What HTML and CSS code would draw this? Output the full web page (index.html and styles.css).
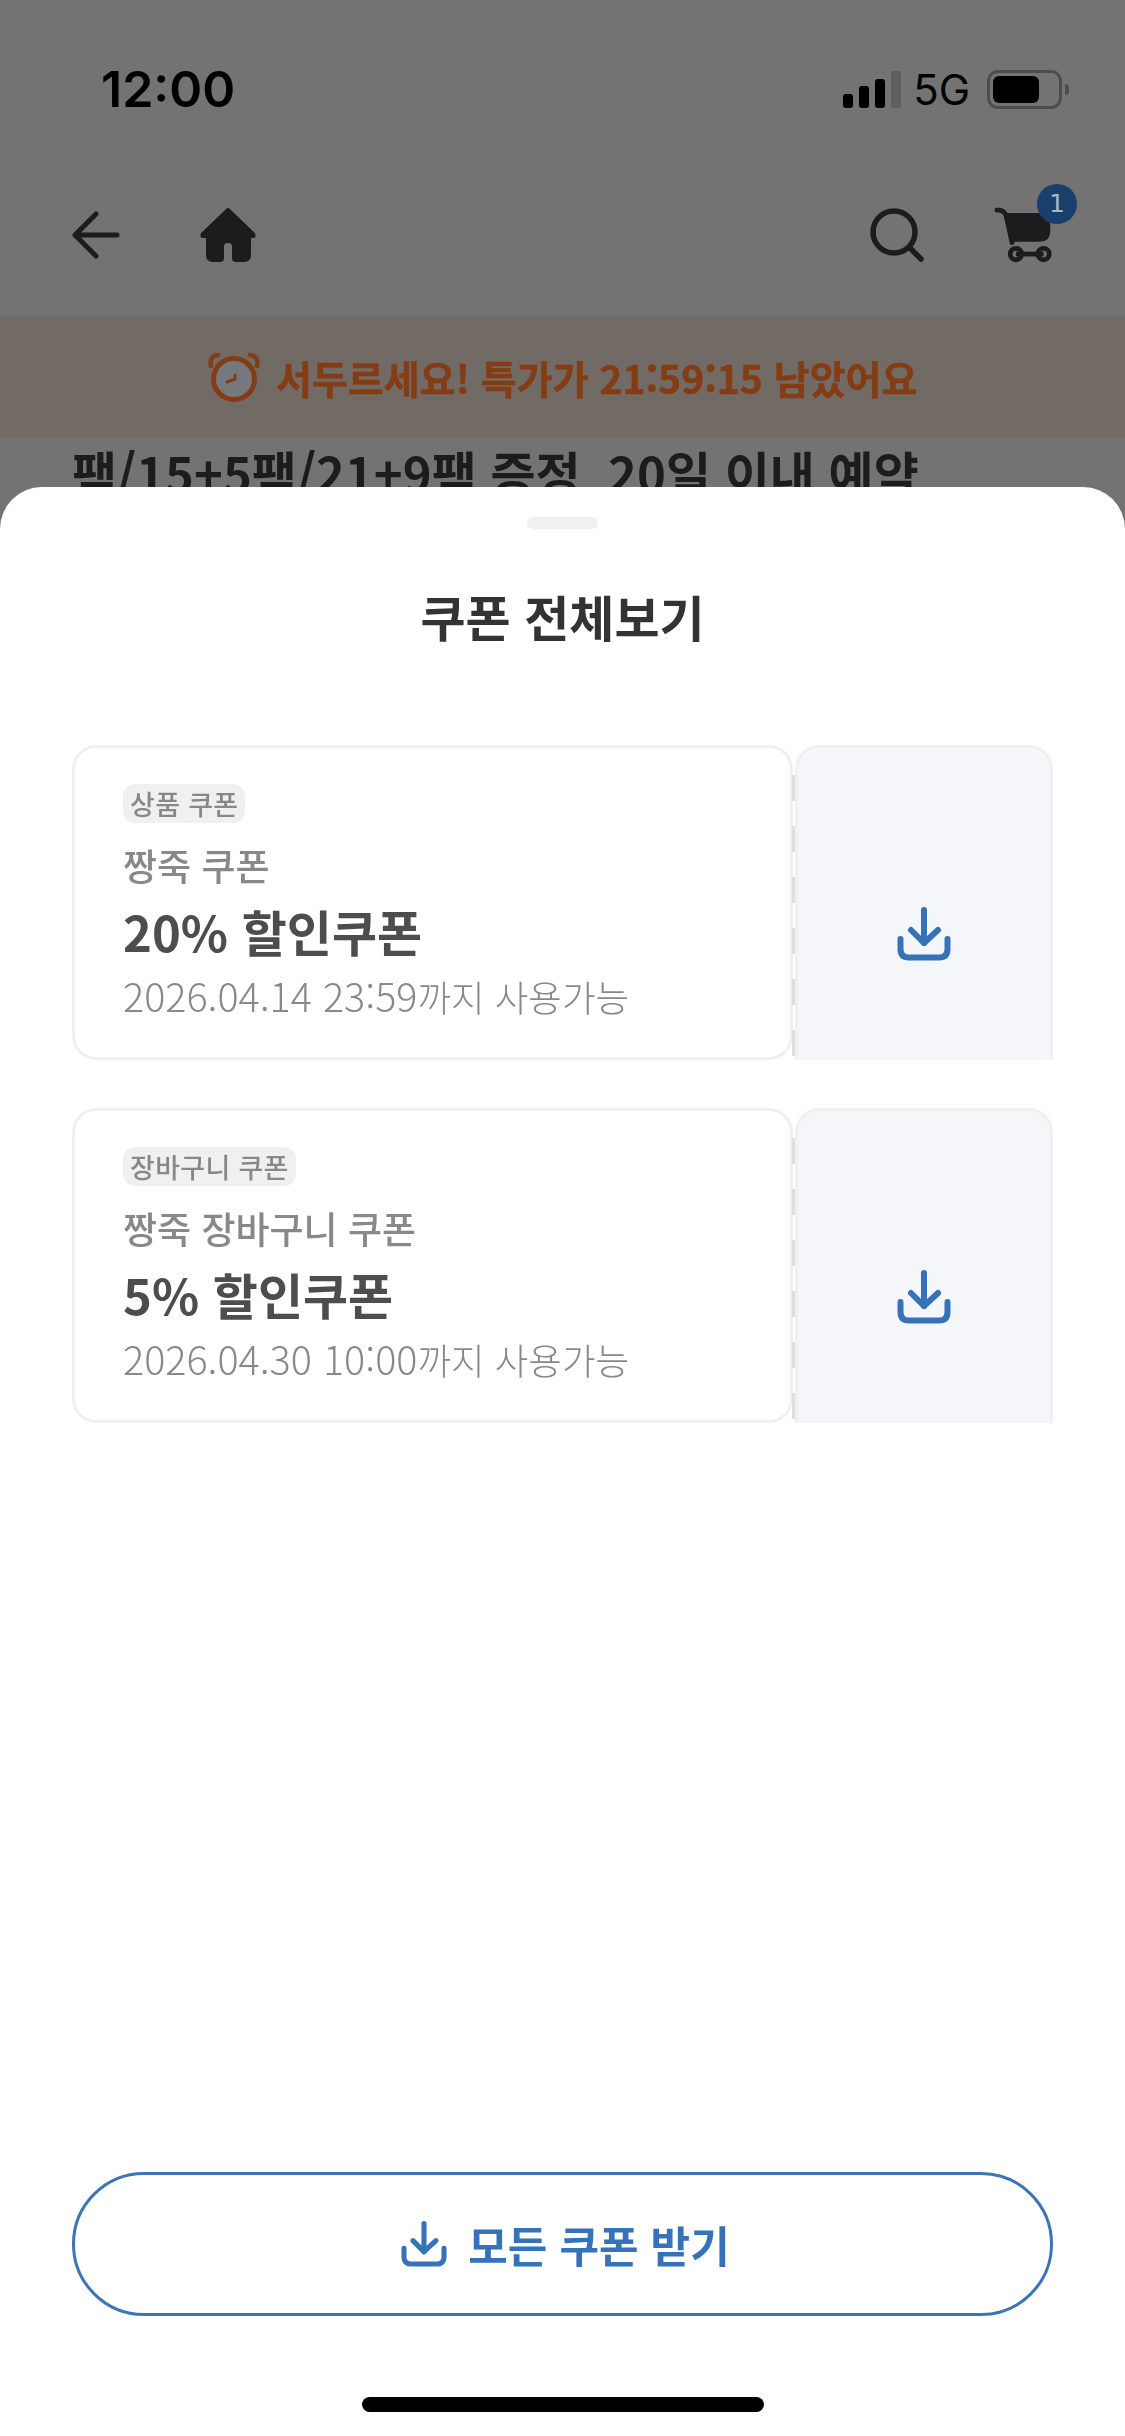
FILE: index.html
```html
<!DOCTYPE html>
<html lang="ko">
<head>
    <meta charset="UTF-8">
    <meta name="viewport" content="width=device-width, initial-scale=1.0">
    <title>쿠폰 전체보기</title>
    <link rel="stylesheet" href="styles.css">
</head>
<body>
    <div class="screen">
        <div class="status-bar">
            <span class="time">12:00</span>
            <div class="status-right">
                <div class="signal">
                    <span class="bar bar-1"></span>
                    <span class="bar bar-2"></span>
                    <span class="bar bar-3"></span>
                    <span class="bar bar-4"></span>
                </div>
                <span class="network">5G</span>
                <div class="battery"><span class="battery-level"></span></div>
            </div>
        </div>

        <div class="nav">
            <div class="nav-group nav-left">
                <svg class="icon-back" viewBox="0 0 48 48" fill="none" stroke="#1c1c1c" stroke-width="5" stroke-linecap="round" stroke-linejoin="round">
                    <path d="M45 24H4"/>
                    <path d="M24 3L3 24l21 21"/>
                </svg>
                <svg class="icon-home" viewBox="0 0 56 54">
                    <path fill="#1c1c1c" stroke="#1c1c1c" stroke-width="4" stroke-linejoin="round" d="M28 2L2.500 26.500V28H8V47Q8 52 13 52H20Q22 52 22 50V38Q22 33 28 33Q34 33 34 38V50Q34 52 36 52H44Q49 52 49 47V28H53.500V26.500Z"/>
                </svg>
            </div>
            <div class="nav-group nav-right">
                <svg class="icon-search" viewBox="0 0 54 54" fill="none" stroke="#1c1c1c" stroke-width="5.500" stroke-linecap="round">
                    <circle cx="24" cy="24" r="21"/>
                    <path d="M40 40L51 51"/>
                </svg>
                <div class="cart">
                    <svg class="icon-cart" viewBox="0 0 64 60" fill="none" stroke="#1c1c1c">
                        <path stroke-width="5" stroke-linecap="round" stroke-linejoin="round" d="M3 4Q11 3 13 11L19 38"/>
                        <path fill="#1c1c1c" stroke="none" d="M13 7H59V26Q59 37 48 37H19Z"/>
                        <path stroke-width="5" d="M23 50H52"/>
                        <circle cx="23" cy="50" r="6" stroke-width="5"/>
                        <circle cx="52" cy="50" r="6" stroke-width="5"/>
                    </svg>
                    <span class="cart-badge">1</span>
                </div>
            </div>
        </div>

        <div class="timer-banner">
            <svg class="icon-alarm" viewBox="0 0 54 50">
                <circle cx="27" cy="27" r="20.500" fill="#75787c" stroke="#843c14" stroke-width="5"/>
                <path fill="none" stroke="#843c14" stroke-width="4.500" stroke-linecap="round" d="M4 14Q2 4 11 3"/>
                <path fill="none" stroke="#843c14" stroke-width="4.500" stroke-linecap="round" d="M50 14Q52 4 43 3"/>
                <path fill="none" stroke="#843c14" stroke-width="3" stroke-linecap="round" stroke-linejoin="round" d="M28 23V27L20 30"/>
            </svg>
            <span class="timer-text">서두르세요! 특가가 21:59:15 남았어요</span>
        </div>

        <h1 class="deal-title">팩/15+5팩/21+9팩 증정&nbsp; 20일 이내 예약</h1>

        <div class="sheet">
            <div class="sheet-handle"></div>
            <h2 class="sheet-title">쿠폰 전체보기</h2>

            <div class="coupon-list">
                <div class="coupon">
                    <div class="coupon-body">
                        <span class="coupon-tag">상품 쿠폰</span>
                        <p class="coupon-name">짱죽 쿠폰</p>
                        <p class="coupon-discount">20% 할인쿠폰</p>
                        <p class="coupon-date"><span class="coupon-time">2026.04.14 23:59</span>까지 사용가능</p>
                    </div>
                    <div class="coupon-action">
                        <svg class="icon-download" viewBox="0 0 54 54" fill="none" stroke="#3572b8" stroke-width="6" stroke-linecap="round" stroke-linejoin="round">
                            <path d="M27 3V36"/>
                            <path d="M14 23L27 36L41 23"/>
                            <path d="M3.500 32V42Q3.500 50.500 12 50.500H42Q50.500 50.500 50.500 42V32"/>
                        </svg>
                    </div>
                </div>

                <div class="coupon">
                    <div class="coupon-body">
                        <span class="coupon-tag">장바구니 쿠폰</span>
                        <p class="coupon-name">짱죽 장바구니 쿠폰</p>
                        <p class="coupon-discount">5% 할인쿠폰</p>
                        <p class="coupon-date"><span class="coupon-time">2026.04.30 10:00</span>까지 사용가능</p>
                    </div>
                    <div class="coupon-action">
                        <svg class="icon-download" viewBox="0 0 54 54" fill="none" stroke="#3572b8" stroke-width="6" stroke-linecap="round" stroke-linejoin="round">
                            <path d="M27 3V36"/>
                            <path d="M14 23L27 36L41 23"/>
                            <path d="M3.500 32V42Q3.500 50.500 12 50.500H42Q50.500 50.500 50.500 42V32"/>
                        </svg>
                    </div>
                </div>
            </div>

            <button class="download-all">
                <svg class="icon-download-small" viewBox="0 0 54 54" fill="none" stroke="#3572b8" stroke-width="6" stroke-linecap="round" stroke-linejoin="round">
                    <path d="M27 3V36"/>
                    <path d="M14 23L27 36L41 23"/>
                    <path d="M3.500 32V42Q3.500 50.500 12 50.500H42Q50.500 50.500 50.500 42V32"/>
                </svg>
                <span>모든 쿠폰 받기</span>
            </button>

            <div class="home-indicator"></div>
        </div>
    </div>
</body>
</html>
```

FILE: styles.css
```css
html, body {
    margin: 0;
    padding: 0;
    background-color: #fff;
}
.screen {
    position: relative;
    width: 1125px;
    height: 2436px;
    overflow: hidden;
    background-color: #737373;
    font-family: "Noto Sans CJK KR", "Noto Sans", sans-serif;
}

/* status bar */
.status-bar {
    display: flex;
    justify-content: space-between;
    align-items: center;
    height: 178px;
    padding: 0 63px 0 101px;
    box-sizing: border-box;
    font-family: Inter, sans-serif;
    color: #000;
}
.time {
    font-size: 50px;
    font-weight: 600;
}
.status-right {
    display: flex;
    align-items: center;
}
.signal {
    display: flex;
    align-items: flex-end;
    gap: 6px;
    height: 37px;
    margin-right: 12px;
}
.bar {
    width: 10px;
    border-radius: 3px;
    background-color: #000;
}
.bar-1 { height: 14px; }
.bar-2 { height: 22px; }
.bar-3 { height: 29px; }
.bar-4 { height: 37px; background-color: #5e5e5e; }
.network {
    font-size: 42px;
    margin-right: 17px;
}
.battery {
    position: relative;
    width: 75px;
    height: 39px;
    box-sizing: border-box;
    padding: 3px;
    border: 3px solid #4d4d4d;
    border-radius: 11px;
}
.battery::after {
    content: "";
    position: absolute;
    right: -10px;
    top: 11px;
    width: 4px;
    height: 11px;
    border-radius: 0 4px 4px 0;
    background-color: #4d4d4d;
}
.battery-level {
    display: block;
    width: 46px;
    height: 27px;
    border-radius: 6px;
    background-color: #000;
}

/* top nav */
.nav {
    display: flex;
    justify-content: space-between;
    align-items: center;
    height: 137px;
    padding: 0 70px 24px 72px;
    box-sizing: border-box;
}
.nav-group {
    display: flex;
    align-items: center;
}
.nav-left { gap: 80px; }
.nav-right { gap: 70px; }
.icon-back { width: 48px; height: 48px; display: block; }
.icon-home { width: 56px; height: 54px; display: block; }
.icon-search { width: 54px; height: 54px; display: block; }
.cart {
    position: relative;
    width: 61px;
    height: 58px;
}
.icon-cart {
    display: block;
    width: 61px;
    height: 58px;
}
.cart-badge {
    position: absolute;
    left: 43px;
    top: -22px;
    width: 40px;
    height: 40px;
    border-radius: 50%;
    background-color: #1a3f6d;
    color: #a9b7c9;
    font-family: "DejaVu Sans", sans-serif;
    font-size: 25px;
    line-height: 40px;
    text-align: center;
}

/* banner behind the sheet */
.timer-banner {
    display: flex;
    justify-content: center;
    align-items: center;
    gap: 15px;
    height: 123px;
    background-color: #726a64;
}
.timer-text {
    color: #843c14;
    font-size: 39px;
    font-weight: 700;
    -webkit-text-stroke: 0.5px #843c14;
    will-change: transform;
}
.icon-alarm { width: 54px; height: 50px; flex: none; }
.deal-title {
    margin: 0;
    padding: 0 72px;
    font-size: 49px;
    font-weight: 700;
    line-height: 68px;
    white-space: nowrap;
    color: #1c1c1c;
}

/* bottom sheet */
.sheet {
    position: absolute;
    left: 0;
    right: 0;
    top: 487px;
    bottom: 0;
    display: flex;
    flex-direction: column;
    align-items: center;
    border-radius: 42px 42px 0 0;
    background-color: #fff;
    will-change: transform;
}
.sheet-handle {
    width: 71px;
    height: 12px;
    margin-top: 30px;
    border-radius: 6px;
    background-color: #f0f0f0;
}
.sheet-title {
    margin: 49px 0 0;
    font-size: 49px;
    font-weight: 700;
    line-height: 76px;
    color: #333;
}

.coupon-list {
    display: flex;
    flex-direction: column;
    gap: 48px;
    width: 981px;
    margin-top: 91px;
}
.coupon {
    display: flex;
    height: 315px;
}
.coupon-body {
    flex: 1;
    box-sizing: border-box;
    padding: 36px 48px 0;
    border: 3px solid #f0f0f0;
    border-radius: 24px;
}
.coupon-tag {
    display: inline-block;
    height: 39px;
    padding: 0 7px;
    border-radius: 12px;
    background-color: #f0f0f0;
    color: #888;
    font-size: 27px;
    font-weight: 500;
    line-height: 39px;
    letter-spacing: 0.3px;
}
.coupon-name {
    margin: 16px 0 0;
    color: #888;
    font-size: 37px;
    font-weight: 500;
    line-height: 52px;
}
.coupon-discount {
    margin: 5px 0 0;
    color: #4d4d4d;
    font-size: 49px;
    font-weight: 700;
    line-height: 70px;
}
.coupon-date {
    margin: 4px 0 0;
    color: #888;
    font-size: 36.5px;
    font-weight: 300;
    line-height: 50px;
}
.coupon-time {
    font-size: 39.5px;
}
.coupon-action {
    position: relative;
    display: flex;
    justify-content: center;
    box-sizing: border-box;
    width: 258px;
    padding-top: 159px;
    margin-left: 2px;
    border: 3px solid #f0f0f0;
    border-bottom: 0;
    border-radius: 24px 24px 0 0;
    background-color: #f4f6fa;
}
/* perforated edge between the two halves */
.coupon-action::before {
    content: "";
    position: absolute;
    left: -6px;
    top: 27px;
    bottom: 0;
    width: 3px;
    background: repeating-linear-gradient(to bottom, #dedede 0, #dedede 26px, transparent 26px, transparent 51px);
}
.icon-download {
    display: block;
    width: 54px;
    height: 54px;
}

.download-all {
    display: flex;
    justify-content: center;
    align-items: center;
    gap: 21px;
    box-sizing: border-box;
    width: 981px;
    height: 144px;
    margin-top: auto;
    padding: 0 0 0 6px;
    border: 3px solid #3e74b3;
    border-radius: 72px;
    background-color: #fff;
    color: #3572b8;
    font-family: inherit;
    font-size: 43px;
    font-weight: 700;
}
.icon-download-small {
    display: block;
    width: 46px;
    height: 46px;
}
.home-indicator {
    width: 402px;
    height: 15px;
    margin: 81px 0 24px;
    border-radius: 8px;
    background-color: #000;
}
```
